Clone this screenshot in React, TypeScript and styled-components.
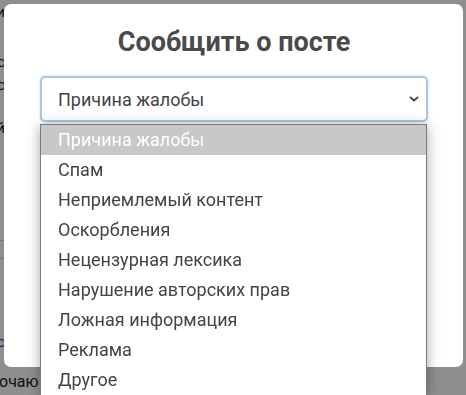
import styled, { createGlobalStyle } from "styled-components";

const GlobalStyle = createGlobalStyle`
  html, body {
    margin: 0;
    padding: 0;
    width: 466px;
    height: 395px;
    overflow: hidden;
    background: #ffffff;
    font-family: Roboto, "Noto Sans", "Liberation Sans", sans-serif;
  }
`;

// Страница под затемнением
const Page = styled.div`
  display: flex;
  flex-direction: column;
  width: 466px;
  height: 395px;
  color: #222;
  font-size: 15px;
`;

const EdgeStrip = styled.div`
  display: flex;
  flex-direction: column;
  width: 5px;
  overflow: hidden;
`;

const EdgeLine = styled.div<{ $gap: number; $color?: string }>`
  display: flex;
  justify-content: flex-end;
  margin-top: ${(p) => p.$gap}px;
  height: 18px;
  line-height: 18px;
  white-space: nowrap;
  color: ${(p) => p.$color || "#222"};
`;

const EdgeRule = styled.div<{ $gap: number }>`
  margin-top: ${(p) => p.$gap}px;
  height: 1px;
  background: #d8d8d8;
`;

const BottomText = styled.div`
  margin-top: 21px;
  margin-left: -1px;
  height: 20px;
  line-height: 20px;
  white-space: nowrap;
  font-size: 16px;
  color: #222;
`;

const Overlay = styled.div`
  position: fixed;
  inset: 0;
  background: rgba(0, 0, 0, 0.44);
`;

const Modal = styled.div`
  position: fixed;
  left: 4px;
  top: 4px;
  width: 459px;
  height: 363px;
  box-sizing: border-box;
  padding: 22px 35px 0 36px;
  background: #ffffff;
  border-radius: 7px;
  display: flex;
  flex-direction: column;
`;

const Title = styled.h2`
  margin: 0;
  text-align: center;
  font-size: 27px;
  line-height: 32px;
  font-weight: 700;
  color: #4a4a4a;
`;

const SelectWrap = styled.div`
  position: relative;
  margin-top: 18px;
`;

const SelectBox = styled.div`
  display: flex;
  align-items: center;
  justify-content: space-between;
  height: 46px;
  box-sizing: border-box;
  padding: 0 5px 0 16px;
  border: 2px solid #a9c8e6;
  border-radius: 5px;
  box-shadow: 0 0 2px rgba(120, 170, 220, 0.5);
  font-size: 18px;
  color: #444;
`;

const Options = styled.ul`
  position: absolute;
  left: 0;
  top: 48px;
  width: 387px;
  box-sizing: border-box;
  margin: 0;
  padding: 0;
  list-style: none;
  background: #ffffff;
  border: 1px solid #7a7a7a;
  box-shadow: 0 2px 12px rgba(0, 0, 0, 0.35);
`;

const Option = styled.li<{ $active?: boolean }>`
  height: 30px;
  line-height: 30px;
  padding-left: 17px;
  font-size: 18px;
  color: ${(p) => (p.$active ? "#ffffff" : "#444")};
  background: ${(p) => (p.$active ? "#c8c8c8" : "transparent")};
`;

const reasons = [
  "Причина жалобы",
  "Спам",
  "Неприемлемый контент",
  "Оскорбления",
  "Нецензурная лексика",
  "Нарушение авторских прав",
  "Ложная информация",
  "Реклама",
  "Другое",
];

function Chevron() {
  return (
    <svg width="14" height="8" viewBox="0 0 14 8">
      <path d="M3 2 L7 5.5 L11 2" fill="none" stroke="#444" strokeWidth="1.8" />
    </svg>
  );
}

export default function App() {
  return (
    <>
      <GlobalStyle />
      <Page>
        <EdgeStrip>
          <EdgeLine $gap={3}>Выбери</EdgeLine>
          <EdgeLine $gap={32}>текс</EdgeLine>
          <EdgeLine $gap={5}>пос</EdgeLine>
          <EdgeLine $gap={25}>новый</EdgeLine>
          <EdgeRule $gap={103} />
          <EdgeRule $gap={17} />
          <EdgeLine $gap={74} $color="#1a55a8">ос</EdgeLine>
        </EdgeStrip>
        <BottomText>очаю</BottomText>
      </Page>
      <Overlay />
      <Modal>
        <Title>Сообщить о посте</Title>
        <SelectWrap>
          <SelectBox>
            <span>{reasons[0]}</span>
            <Chevron />
          </SelectBox>
          <Options>
            {reasons.map((r, i) => (
              <Option key={r} $active={i === 0}>
                {r}
              </Option>
            ))}
          </Options>
        </SelectWrap>
      </Modal>
    </>
  );
}
